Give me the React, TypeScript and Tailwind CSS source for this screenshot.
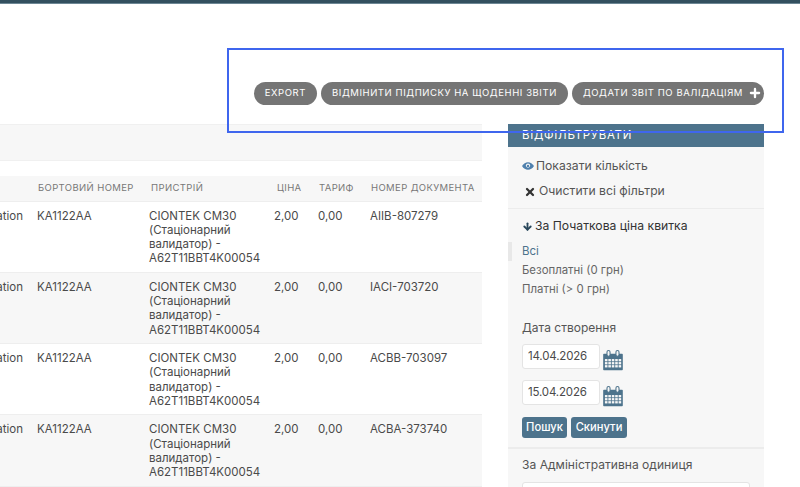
import { ArrowDown, Plus, X } from "lucide-react";

const rows = [
  { doc: "AIIB-807279", bg: "bg-white" },
  { doc: "IACI-703720", bg: "bg-[#f7f7f7]" },
  { doc: "ACBB-703097", bg: "bg-white" },
  { doc: "ACBA-373740", bg: "bg-[#f7f7f7]" },
];

function CalendarIcon() {
  return (
    <svg width="20" height="22" viewBox="0 0 21 22" className="mt-[5px] shrink-0 text-[#4d738c]">
      <path d="M1 4.5h19a.8.8 0 0 1 .8.8V21a.8.8 0 0 1-.8.8H1a.8.8 0 0 1-.8-.8V5.3A.8.8 0 0 1 1 4.5z" fill="currentColor" />
      <g fill="#f7f7f7">
        {[10, 13.2, 16.4].map((y) =>
          [2, 5.6, 9.2, 12.8, 16.4].map((x) => <rect key={`${x}-${y}`} x={x} y={y} width="2.7" height="2.4" />),
        )}
      </g>
      <rect x="4.2" y="1" width="3.2" height="6" rx="1.6" fill="#f7f7f7" stroke="currentColor" strokeWidth="1.1" />
      <rect x="13.6" y="1" width="3.2" height="6" rx="1.6" fill="#f7f7f7" stroke="currentColor" strokeWidth="1.1" />
    </svg>
  );
}

function EyeIcon() {
  return (
    <svg width="12" height="8" viewBox="0 0 12 8" className="shrink-0 text-[#4f80ad]">
      <path d="M0 4C1.6 1.5 3.6.2 6 .2S10.4 1.5 12 4c-1.6 2.5-3.6 3.8-6 3.8S1.6 6.5 0 4z" fill="currentColor" />
      <circle cx="6" cy="3.6" r="2.1" fill="#f7f7f7" />
      <circle cx="6" cy="3.9" r="1.2" fill="currentColor" />
    </svg>
  );
}

function PillButton({ children }: { children: React.ReactNode }) {
  return (
    <button className="flex h-[23px] items-center rounded-full bg-[#757575] px-[11px] text-[9.5px] font-normal uppercase tracking-[0.06em] whitespace-nowrap text-white">
      {children}
    </button>
  );
}

function DateRow({ value }: { value: string }) {
  return (
    <div className="flex h-[25px] items-start gap-[3px]">
      <div className="flex h-[25px] w-[78px] items-center rounded-[3px] border border-[#e4e4e4] bg-white pl-[5px] text-[11.5px] tracking-[-0.015em] text-[#4a4a4a]">
        {value}
      </div>
      <CalendarIcon />
    </div>
  );
}

export default function App() {
  return (
    <div className="relative h-[487px] w-[800px] overflow-hidden bg-white font-['Inter',sans-serif] text-[11.5px] text-[#4a4a4a]">
      <div className="h-[4px] border-b border-[#6d8795] bg-[#33505f]" />

      <div className="flex h-[120px] items-start justify-end gap-[4px] pt-[78px] pr-[36px]">
        <PillButton>Export</PillButton>
        <PillButton>Відмінити підписку на щоденні звіти</PillButton>
        <PillButton>
          Додати звіт по валідаціям
          <Plus size={14} strokeWidth={4} className="mt-[-1px] mr-[-9px] ml-[5px]" />
        </PillButton>
      </div>

      <div className="flex items-start">
        <div className="w-[482px] overflow-hidden">
          <div className="mb-[15px] h-[37px] border-y border-[#f0f0f0] bg-[#f7f7f7]" />
          <table className="-ml-[200px] w-[682px] table-fixed border-collapse text-left">
            <colgroup>
              <col className="w-[229px]" />
              <col className="w-[114px]" />
              <col className="w-[126px]" />
              <col className="w-[42px]" />
              <col className="w-[51px]" />
              <col className="w-[120px]" />
            </colgroup>
            <thead>
              <tr className="h-[25px] border-b border-[#eeeeee] bg-[#f7f7f7] text-[9.5px] tracking-[0.04em] text-[#777]">
                <th className="font-normal" />
                <th className="pl-[9px] font-normal">БОРТОВИЙ НОМЕР</th>
                <th className="pl-[8px] font-normal">ПРИСТРІЙ</th>
                <th className="pl-[8px] font-normal">ЦІНА</th>
                <th className="pl-[8px] font-normal">ТАРИФ</th>
                <th className="pl-[9px] font-normal">НОМЕР ДОКУМЕНТА</th>
              </tr>
            </thead>
            <tbody>
              {rows.map((row) => (
                <tr key={row.doc} className={`h-[71.3px] border-b border-[#eeeeee] align-top leading-[14.3px] ${row.bg}`}>
                  <td className="pt-[7px] pr-[6px] text-right">Validation</td>
                  <td className="pt-[7px] pl-[8px]">KA1122AA</td>
                  <td className="pt-[7px] pl-[6px]">
                    CIONTEK CM30 (Стаціонарний валидатор) - A62T11BBT4K00054
                  </td>
                  <td className="pt-[7px] pl-[5px]">2,00</td>
                  <td className="pt-[7px] pl-[7px]">0,00</td>
                  <td className="pt-[7px] pl-[8px]">{row.doc}</td>
                </tr>
              ))}
            </tbody>
          </table>
        </div>

        <aside className="ml-[26px] h-[400px] w-[256px] bg-[#f7f7f7]">
          <div className="flex h-[23px] items-center bg-[#4d738c] pl-[14px] text-[11.5px] font-normal tracking-[0.06em] text-white">
            ВІДФІЛЬТРУВАТИ
          </div>
          <div className="border-b border-[#ececec] pl-[14px] text-[12.2px] text-[#555]">
            <div className="flex h-[26px] items-center gap-[2px] pt-[12px]">
              <EyeIcon />
              <span>Показати кількість</span>
            </div>
            <div className="flex h-[25px] items-center gap-[3px] pt-[12px] pl-[2px]">
              <X size={12} strokeWidth={4.5} className="shrink-0 text-[#333]" />
              <span>Очистити всі фільтри</span>
            </div>
            <div className="h-[10px]" />
          </div>
          <div className="flex h-[33px] items-center gap-[2px] pt-[1px] pl-[14px] text-[12.2px] text-[#333]">
            <ArrowDown size={11} strokeWidth={4} className="shrink-0 text-[#28465a]" />
            <span>За Початкова ціна квитка</span>
          </div>
          <div className="flex h-[19px] items-center border-l-[4px] border-[#e8e8e8] pl-[10px] text-[#4d738c]">Всі</div>
          <div className="flex h-[19px] items-center pl-[14px] text-[11.4px] text-[#666]">Безоплатні (0 грн)</div>
          <div className="flex h-[19px] items-center pl-[14px] text-[11.4px] text-[#666]">Платні (&gt; 0 грн)</div>

          <div className="mt-[20px] pl-[14px]">
            <div className="flex h-[18px] items-center text-[12px] text-[#555]">Дата створення</div>
            <div className="mt-[7px] flex flex-col gap-[11px]">
              <DateRow value="14.04.2026" />
              <DateRow value="15.04.2026" />
            </div>
            <div className="mt-[12px] flex gap-[4px] text-[11.2px] text-white">
              <button className="h-[21px] w-[45px] rounded-[3px] bg-[#4d738c] font-medium">Пошук</button>
              <button className="h-[21px] w-[56px] rounded-[3px] bg-[#4d738c] font-medium">Скинути</button>
            </div>
          </div>
          <div className="mt-[9px] border-t-2 border-[#ececec] pt-[7px] pl-[14px]">
            <div className="text-[12.1px] text-[#555]">За Адміністративна одиниця</div>
            <div className="mt-[8px] h-[30px] w-[228px] rounded-[3px] border border-[#e4e4e4] bg-white" />
          </div>
        </aside>
      </div>

      <div className="pointer-events-none absolute top-[48px] left-[227px] h-[85px] w-[557px] border-2 border-[#3f66ee]" />
    </div>
  );
}
